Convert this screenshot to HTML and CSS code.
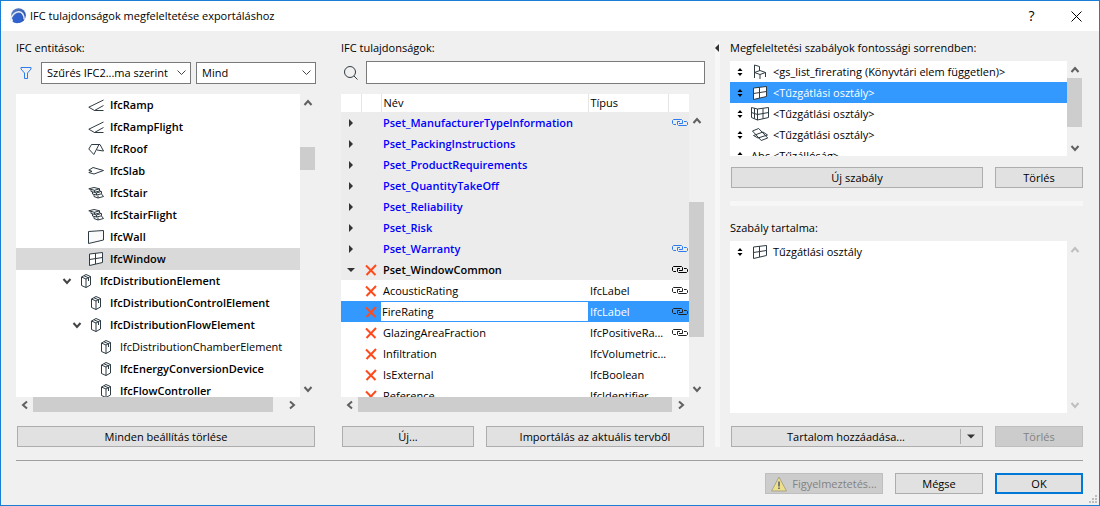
FILE: index.html
```html
<!DOCTYPE html>
<html lang="hu">
<head>
    <meta charset="UTF-8">
    <title>IFC tulajdonságok megfeleltetése exportáláshoz</title>
    <link rel="stylesheet" href="styles.css">
</head>
<body>
    <svg class="sprite" aria-hidden="true">
        <symbol id="up" viewBox="0 0 10 10"><path d="M1.500 7 5 3l3.500 4" fill="none" stroke="currentColor" stroke-width="2"/></symbol>
        <symbol id="down" viewBox="0 0 10 10"><path d="M1.500 3 5 7l3.500-4" fill="none" stroke="currentColor" stroke-width="2"/></symbol>
        <symbol id="left" viewBox="0 0 10 10"><path d="M7 1.500 3 5l4 3.500" fill="none" stroke="currentColor" stroke-width="2"/></symbol>
        <symbol id="right" viewBox="0 0 10 10"><path d="M3 1.500 7 5l-4 3.500" fill="none" stroke="currentColor" stroke-width="2"/></symbol>
        <symbol id="closed" viewBox="0 0 10 10"><path d="M3 1v8l4-4z" fill="#333"/></symbol>
        <symbol id="opened" viewBox="0 0 10 10"><path d="M1 3h8L5 7z" fill="#333"/></symbol>
        <symbol id="sort" viewBox="0 0 8 10"><path d="M1.500 4h5L4 1zM1.500 6h5L4 9z" fill="#000"/></symbol>
        <symbol id="cross" viewBox="0 0 12 12"><path d="M1 1.500 10.500 11M11 1 1.500 11" fill="none" stroke="#ff4a1c" stroke-width="2"/></symbol>
        <symbol id="link" viewBox="0 0 16 8"><path d="M4 5.500H1.500l-1-1v-3l1-1h8l1 1v3H7M8 2.500H5.500v3l1 1h8l1-1v-2l-1-1H12" fill="none" stroke="currentColor"/></symbol>
        <symbol id="ramp" viewBox="0 0 16 16"><path d="M15.500 3 .8 10.200 6.500 13.500h9M15.500 8.500l-9 5" fill="none" stroke="#2e3b42"/></symbol>
        <symbol id="roof" viewBox="0 0 16 16"><path d="M3.500 3.500H12L15.500 10 9 9M3.500 3.500.8 8l5 5.500L11 3.500" fill="none" stroke="#2e3b42"/></symbol>
        <symbol id="slab" viewBox="0 0 16 16"><path d="M5 4.500 15.500 7.500 6 11 .8 9.500 4 8.300.8 7.200z" fill="none" stroke="#2e3b42"/></symbol>
        <symbol id="stair" viewBox="0 0 16 16"><path d="M.8 3.800 6 2.500l5.500 1.300-5 1.500zM6.500 5.300v2l5-1.300V3.800M3 4.500v2l3.500.8M6.500 7.500l2 .5 4-1.300v-1M4.500 7v2l4 1V8M8.500 10l5-1.200V6.500l-1.500 0M6 9.500v2l4 1.500v-2.500M10 13l5.500-1.500-2-2.500" fill="none" stroke="#2e3b42"/></symbol>
        <symbol id="wall" viewBox="0 0 16 16"><path d="M.5 2.500 15.500 1.500v9.500L.5 14.500z" fill="#fafafa" stroke="#2e3b42"/></symbol>
        <symbol id="window" viewBox="0 0 16 16"><path d="M1.500 3 14.500 1.500v10L1.500 14.500zM7.500 2.300v10.700M1.500 8.500l13-2" fill="#fff" stroke="#2e3b42"/></symbol>
        <symbol id="cube" viewBox="0 0 16 16"><path d="M3.500 4 8 1.500 12.500 3.500v8.500L8 14.500 3.500 12.500zM3.500 4 8 6l4.500-2.500M8 6v8.500M6 2.800l4.500 2V8" fill="none" stroke="#2e3b42"/></symbol>
        <symbol id="chair" viewBox="0 0 18 16"><path d="M3.500 14V1l5 1.500V7M3.500 8.500l5.500-2 5.500 2-5.500 2zM9 10.500V15M14.500 8.500V13" fill="none" stroke="#2e3b42"/></symbol>
        <symbol id="curtain" viewBox="0 0 18 16"><path d="M.5 1.500 6.500 3 17.500 1.500v10l-11 2.500-6-2.500zM3.500 2.300v10.200M6.500 3v11M12 2.300v10.500M.5 6.500l6 2 11-2" fill="none" stroke="#2e3b42"/></symbol>
        <symbol id="skylight" viewBox="0 0 18 16"><path d="M1.500 4 7.700 1.500l9 9.500-6.500 2.500zM2.500 8.500 12 5l4.500 3-9.500 3z" fill="none" stroke="#2e3b42"/></symbol>
    </svg>

    <div class="dialog">
        <header class="titlebar">
            <svg class="logo" viewBox="0 0 16 16">
                <defs><linearGradient id="ball" x1="0" y1="0" x2="1" y2="1"><stop offset="0" stop-color="#5f86c8"/><stop offset="1" stop-color="#1b3f9e"/></linearGradient></defs>
                <circle cx="8.500" cy="7.500" r="7.300" fill="url(#ball)"/>
                <path d="M0 13C1.500 7 5.500 3.500 9 3.700c3.300.2 5 3.300 5.200 7.800" fill="none" stroke="#e6eefb" stroke-width="1.500"/>
                <path d="M2.500 13.500C4 8 6.500 5.300 8.700 5.500c2.500.2 3.600 3 3.800 7.500C9 16 5 15.500 2.500 13.500z" fill="#2f62cf"/>
            </svg>
            <h1>IFC tulajdonságok megfeleltetése exportáláshoz</h1>
            <button class="caption" type="button" aria-label="Súgó">?</button>
            <button class="caption" type="button" aria-label="Bezárás"><svg width="11" height="11" viewBox="0 0 11 11"><path d="M.5.5l10 10M10.500.5l-10 10" stroke="#000"/></svg></button>
        </header>

        <main class="panes">
            <section class="pane entities">
                <h2>IFC entitások:</h2>
                <div class="filters">
                    <svg class="funnel" viewBox="0 0 12 12"><path d="M1 .5h10v1.500L7.500 6v5.500h-3V6L1 2z" fill="none" stroke="#2e7bf0"/></svg>
                    <select class="schema" aria-label="Séma szűrő"><option>Szűrés IFC2...ma szerint</option></select>
                    <select class="kind" aria-label="Típus szűrő"><option>Mind</option></select>
                </div>
                <div class="scroller">
                    <ul class="tree">
                        <li class="l2"><i></i><svg class="icon"><use href="#ramp"/></svg>IfcRamp</li>
                        <li class="l2"><i></i><svg class="icon"><use href="#ramp"/></svg>IfcRampFlight</li>
                        <li class="l2"><i></i><svg class="icon"><use href="#roof"/></svg>IfcRoof</li>
                        <li class="l2"><i></i><svg class="icon"><use href="#slab"/></svg>IfcSlab</li>
                        <li class="l2"><i></i><svg class="icon"><use href="#stair"/></svg>IfcStair</li>
                        <li class="l2"><i></i><svg class="icon"><use href="#stair"/></svg>IfcStairFlight</li>
                        <li class="l2"><i></i><svg class="icon"><use href="#wall"/></svg>IfcWall</li>
                        <li class="l2 current"><i></i><svg class="icon"><use href="#window"/></svg>IfcWindow</li>
                        <li class="l1"><svg class="arrow"><use href="#down"/></svg><svg class="icon"><use href="#cube"/></svg>IfcDistributionElement</li>
                        <li class="l2"><i></i><svg class="icon"><use href="#cube"/></svg>IfcDistributionControlElement</li>
                        <li class="l2"><svg class="arrow"><use href="#down"/></svg><svg class="icon"><use href="#cube"/></svg>IfcDistributionFlowElement</li>
                        <li class="l3 light"><i></i><svg class="icon"><use href="#cube"/></svg>IfcDistributionChamberElement</li>
                        <li class="l3"><i></i><svg class="icon"><use href="#cube"/></svg>IfcEnergyConversionDevice</li>
                        <li class="l3"><i></i><svg class="icon"><use href="#cube"/></svg>IfcFlowController</li>
                    </ul>
                    <div class="vbar">
                        <button type="button" aria-label="Fel"><svg class="arrow"><use href="#up"/></svg></button>
                        <div class="track tree-track"><div class="thumb"></div></div>
                        <button type="button" aria-label="Le"><svg class="arrow"><use href="#down"/></svg></button>
                    </div>
                    <div class="hbar">
                        <button type="button" aria-label="Balra"><svg class="arrow"><use href="#left"/></svg></button>
                        <div class="track tree-htrack"><div class="thumb"></div></div>
                        <button type="button" aria-label="Jobbra"><svg class="arrow"><use href="#right"/></svg></button>
                    </div>
                </div>
                <div class="actions">
                    <button class="btn wide" type="button">Minden beállítás törlése</button>
                </div>
            </section>

            <section class="pane properties">
                <h2><label for="search">IFC tulajdonságok:</label></h2>
                <div class="filters">
                    <svg class="lens" viewBox="0 0 14 14"><circle cx="6" cy="6" r="5.500" fill="none" stroke="#2e3b42"/><path d="M10 10l3.500 3.500" stroke="#2e3b42"/></svg>
                    <input id="search" class="search" type="text">
                </div>
                <div class="scroller">
                    <div class="grid-wrap">
                        <table class="grid">
                            <colgroup><col class="c-mark"><col class="c-mark"><col><col class="c-type"><col class="c-link"></colgroup>
                            <thead>
                                <tr><th></th><th></th><th>Név</th><th>Típus</th><th></th></tr>
                            </thead>
                            <tbody>
                                <tr class="set"><td><svg class="arrow"><use href="#closed"/></svg></td><td></td><td>Pset_ManufacturerTypeInformation</td><td></td><td><svg class="link"><use href="#link"/></svg></td></tr>
                                <tr class="set"><td><svg class="arrow"><use href="#closed"/></svg></td><td></td><td>Pset_PackingInstructions</td><td></td><td></td></tr>
                                <tr class="set"><td><svg class="arrow"><use href="#closed"/></svg></td><td></td><td>Pset_ProductRequirements</td><td></td><td></td></tr>
                                <tr class="set"><td><svg class="arrow"><use href="#closed"/></svg></td><td></td><td>Pset_QuantityTakeOff</td><td></td><td></td></tr>
                                <tr class="set"><td><svg class="arrow"><use href="#closed"/></svg></td><td></td><td>Pset_Reliability</td><td></td><td></td></tr>
                                <tr class="set"><td><svg class="arrow"><use href="#closed"/></svg></td><td></td><td>Pset_Risk</td><td></td><td></td></tr>
                                <tr class="set"><td><svg class="arrow"><use href="#closed"/></svg></td><td></td><td>Pset_Warranty</td><td></td><td><svg class="link"><use href="#link"/></svg></td></tr>
                                <tr class="set own"><td><svg class="arrow"><use href="#opened"/></svg></td><td><svg class="cross"><use href="#cross"/></svg></td><td>Pset_WindowCommon</td><td></td><td><svg class="link"><use href="#link"/></svg></td></tr>
                                <tr><td></td><td><svg class="cross"><use href="#cross"/></svg></td><td>AcousticRating</td><td>IfcLabel</td><td><svg class="link"><use href="#link"/></svg></td></tr>
                                <tr class="selected"><td></td><td><svg class="cross"><use href="#cross"/></svg></td><td class="editing"><input type="text" value="FireRating" aria-label="Név"></td><td>IfcLabel</td><td><svg class="link"><use href="#link"/></svg></td></tr>
                                <tr><td></td><td><svg class="cross"><use href="#cross"/></svg></td><td>GlazingAreaFraction</td><td>IfcPositiveRa...</td><td><svg class="link"><use href="#link"/></svg></td></tr>
                                <tr><td></td><td><svg class="cross"><use href="#cross"/></svg></td><td>Infiltration</td><td>IfcVolumetric...</td><td></td></tr>
                                <tr><td></td><td><svg class="cross"><use href="#cross"/></svg></td><td>IsExternal</td><td>IfcBoolean</td><td></td></tr>
                                <tr><td></td><td><svg class="cross"><use href="#cross"/></svg></td><td>Reference</td><td>IfcIdentifier</td><td></td></tr>
                            </tbody>
                        </table>
                    </div>
                    <div class="vbar below-head">
                        <button type="button" aria-label="Fel"><svg class="arrow"><use href="#up"/></svg></button>
                        <div class="track grid-track"><div class="thumb"></div></div>
                        <button type="button" aria-label="Le"><svg class="arrow"><use href="#down"/></svg></button>
                    </div>
                    <div class="hbar">
                        <button type="button" aria-label="Balra"><svg class="arrow"><use href="#left"/></svg></button>
                        <div class="track"><div class="thumb"></div></div>
                        <button type="button" aria-label="Jobbra"><svg class="arrow"><use href="#right"/></svg></button>
                    </div>
                </div>
                <div class="actions">
                    <button class="btn new" type="button">Új...</button>
                    <button class="btn wide" type="button">Importálás az aktuális tervből</button>
                </div>
            </section>

            <div class="splitter"><svg viewBox="0 0 5 8"><path d="M4 0v8L0 4z" fill="#333"/></svg></div>

            <section class="pane rules">
                <h2>Megfeleltetési szabályok fontossági sorrendben:</h2>
                <div class="scroller short">
                    <ul class="list">
                        <li><svg class="sort"><use href="#sort"/></svg><svg class="icon18"><use href="#chair"/></svg>&lt;gs_list_firerating (Könyvtári elem független)&gt;</li>
                        <li class="selected"><svg class="sort"><use href="#sort"/></svg><svg class="icon18"><use href="#window"/></svg>&lt;Tűzgátlási osztály&gt;</li>
                        <li><svg class="sort"><use href="#sort"/></svg><svg class="icon18"><use href="#curtain"/></svg>&lt;Tűzgátlási osztály&gt;</li>
                        <li><svg class="sort"><use href="#sort"/></svg><svg class="icon18"><use href="#skylight"/></svg>&lt;Tűzgátlási osztály&gt;</li>
                        <li><svg class="sort"><use href="#sort"/></svg><span class="abc">Abc</span>&lt;Tűzállóság&gt;</li>
                    </ul>
                    <div class="vbar">
                        <button type="button" aria-label="Fel"><svg class="arrow"><use href="#up"/></svg></button>
                        <div class="track"><div class="thumb rule-thumb"></div></div>
                        <button type="button" aria-label="Le"><svg class="arrow"><use href="#down"/></svg></button>
                    </div>
                </div>
                <div class="actions upper">
                    <button class="btn wide" type="button">Új szabály</button>
                    <button class="btn small" type="button">Törlés</button>
                </div>
                <div class="divider"></div>
                <h2>Szabály tartalma:</h2>
                <div class="scroller">
                    <ul class="list">
                        <li><svg class="sort"><use href="#sort"/></svg><svg class="icon18"><use href="#window"/></svg>Tűzgátlási osztály</li>
                    </ul>
                    <div class="vbar off">
                        <button type="button" aria-label="Fel" disabled><svg class="arrow"><use href="#up"/></svg></button>
                        <div class="track"></div>
                        <button type="button" aria-label="Le" disabled><svg class="arrow"><use href="#down"/></svg></button>
                    </div>
                </div>
                <div class="actions">
                    <button class="btn wide split" type="button"><span>Tartalom hozzáadása...</span><svg class="arrow"><use href="#opened"/></svg></button>
                    <button class="btn small" type="button" disabled>Törlés</button>
                </div>
            </section>
        </main>

        <footer class="footer">
            <button class="btn warn" type="button" disabled>
                <svg viewBox="0 0 16 16"><path d="M8 1 15.500 15H.5z" fill="#eee08a" stroke="#a9a58c" stroke-linejoin="round"/><path d="M8 5.500v5M8 11.500v1.500" stroke="#777" stroke-width="2"/></svg>
                Figyelmeztetés...
            </button>
            <button class="btn small" type="button">Mégse</button>
            <button class="btn small primary" type="button">OK</button>
            <svg class="grip" viewBox="0 0 8 8"><path d="M6 0h2v2H6zM3 3h2v2H3zM6 3h2v2H6zM0 6h2v2H0zM3 6h2v2H3zM6 6h2v2H6z" fill="#bdbdbd"/></svg>
        </footer>
    </div>
</body>
</html>
```
FILE: styles.css
```css
* { box-sizing: border-box; }
body { margin: 0; font: 11px/14px "Open Sans", "Noto Sans", sans-serif; color: #000; }
h1, h2, ul { margin: 0; padding: 0; font-size: inherit; font-weight: normal; }
ul { list-style: none; }
svg { display: block; flex: none; }
button, input, select { font: inherit; color: inherit; }
.sprite { position: absolute; width: 0; height: 0; }

.dialog { position: relative; display: flex; flex-direction: column; height: 100vh; background: #f0f0f0; border: 1px solid #1a7fd4; }

.titlebar { display: flex; align-items: center; height: 30px; padding-left: 9px; background: #fff; }
.titlebar h1 { flex: 1; margin-left: 4px; }
.logo { width: 16px; height: 16px; }
.caption { display: flex; align-items: center; justify-content: center; width: 45px; height: 30px; padding: 0; border: none; background: none; font-size: 14px; }

/* panes */
.panes { flex: 1; min-height: 0; display: flex; padding: 10px 16px 13px 15px; }
.pane { display: flex; flex-direction: column; min-width: 0; }
.pane h2 { height: 14px; white-space: nowrap; }
.entities { flex: 300 1 0; }
.properties { flex: 364 1 0; margin-left: 25px; }
.rules { flex: 353 1 0; margin-left: 10px; }
.splitter { width: 5px; margin-left: 10px; padding-top: 3px; background: #f7f7f7; }
.splitter svg { width: 5px; height: 8px; }

.filters { display: flex; align-items: center; height: 23px; margin: 6px 0 10px; }
.funnel { width: 12px; height: 12px; margin: 0 9px 0 4px; }
.lens { width: 14px; height: 14px; margin: 0 8px 0 3px; }
.search { flex: 1; min-width: 0; height: 23px; border: 1px solid #7a7a7a; background: #fff; }
select { height: 22px; padding: 0 5px; border: 1px solid #7a7a7a; border-radius: 0; appearance: none; background: #fff url("data:image/svg+xml,%3Csvg xmlns='http://www.w3.org/2000/svg' width='9' height='6'%3E%3Cpath d='M.5.5l4 4 4-4' fill='none' stroke='%23444'/%3E%3C/svg%3E") no-repeat right 4px center; }
.schema { flex: 150 1 150px; min-width: 0; margin-right: 5px; }
.kind { flex: 120 1 120px; min-width: 0; }

/* scroll areas */
.scroller { flex: 1; min-height: 0; display: grid; grid-template: minmax(0, 1fr) auto / minmax(0, 1fr) 16px; }
.short { flex: none; height: 95px; margin-top: 6px; }
.vbar, .hbar { display: flex; color: #606060; }
.vbar { flex-direction: column; }
.hbar { height: 15px; }
.vbar button, .hbar button { display: flex; align-items: center; justify-content: center; width: 15px; height: 17px; padding: 0; border: none; background: none; }
.hbar button { height: 15px; width: 17px; }
.off button { color: #bfbfbf; }
.below-head { padding-top: 18px; }
.track { flex: 1; display: flex; flex-direction: column; min-height: 0; }
.thumb { flex: 1; width: 15px; background: #cdcdcd; }
.hbar .thumb { width: 100%; }
.tree-track { padding: 36px 0 210px; }
.tree-htrack { padding-right: 10px; }
.grid-track { padding: 73px 0 43px; }
.rule-thumb { flex: none; height: 49px; }
.arrow { width: 10px; height: 10px; }

.tree, .list, .grid-wrap { background: #fff; overflow: hidden; white-space: nowrap; }
.tree li { display: flex; align-items: center; gap: 6px; height: 22px; font-weight: 600; }
.tree i { flex: none; width: 10px; }
.tree .arrow { color: #444; }
.tree .l1 { padding-left: 46px; }
.tree .l2 { padding-left: 56px; }
.tree .l3 { padding-left: 66px; }
.tree .light { font-weight: normal; }
.tree .current { background: #d9d9d9; }
.icon { width: 16px; height: 16px; }

.list li { display: flex; align-items: center; height: 21px; padding-left: 6px; }
.list .selected { background: #3399ff; color: #fff; }
.sort { width: 8px; height: 10px; margin-right: 7px; }
.icon18 { width: 18px; height: 16px; margin-right: 4px; }
.abc { width: 18px; margin-right: 4px; }

/* property table */
.grid { width: 100%; table-layout: fixed; border-collapse: collapse; }
.c-mark { width: 20px; }
.c-type { width: 80px; }
.c-link { width: 21px; }
.grid th, .grid td { padding: 0 0 0 2px; text-align: left; font-weight: normal; overflow: hidden; }
.grid th { height: 18px; border-left: 1px solid #e5e5e5; }
.grid th:first-child { border-left: none; }
.grid td { height: 21px; }
.grid td:nth-child(1) { padding-left: 5px; }
.grid td:nth-child(2), .grid td:nth-child(5) { padding-left: 4px; }
.grid .set { background: #ececec; color: #0000ff; }
.grid .set td { font-weight: 600; }
.grid .set .link { color: #2e7bf0; }
.grid .own, .grid .own .link { color: #000; }
.grid .selected { background: #3399ff; color: #fff; }
.grid td.editing { padding: 0; }
.editing input { display: block; width: 100%; height: 19px; padding: 0 1px; border: none; background: #fff; color: #000; }
.cross { width: 12px; height: 12px; }
.link { width: 16px; height: 8px; color: #222; }

/* buttons */
.actions { display: flex; gap: 12px; margin-top: 14px; padding: 0 1px; }
.rules .actions { padding-right: 0; margin-top: 13px; }
.rules .upper { margin-top: 11px; }
.btn { display: flex; align-items: center; justify-content: center; height: 21px; padding: 0 8px; border: 1px solid #adadad; background: #e1e1e1; white-space: nowrap; }
.btn:disabled { background: #cccccc; border-color: #bfbfbf; color: #838383; }
.wide { flex: 1; }
.new { width: 132px; }
.small { width: 88px; }
.primary { border: 2px solid #0078d7; }
.split { padding: 0 6px 0 0; }
.split span { flex: 1; }
.split .arrow { width: 16px; height: 15px; padding-left: 5px; border-left: 1px solid #adadad; }
.divider { height: 5px; margin: 13px 0 15px; background: #f7f7f7; }
.divider + h2 { margin-bottom: 6px; }

.footer { display: flex; justify-content: flex-end; gap: 12px; margin: 0 16px 0 15px; padding: 12px 0 11px; border-top: 1px solid #a0a0a0; }
.warn { width: 118px; gap: 5px; padding: 0; }
.warn svg { width: 16px; height: 16px; }
.grip { position: absolute; right: 2px; bottom: 2px; width: 8px; height: 8px; }
```
